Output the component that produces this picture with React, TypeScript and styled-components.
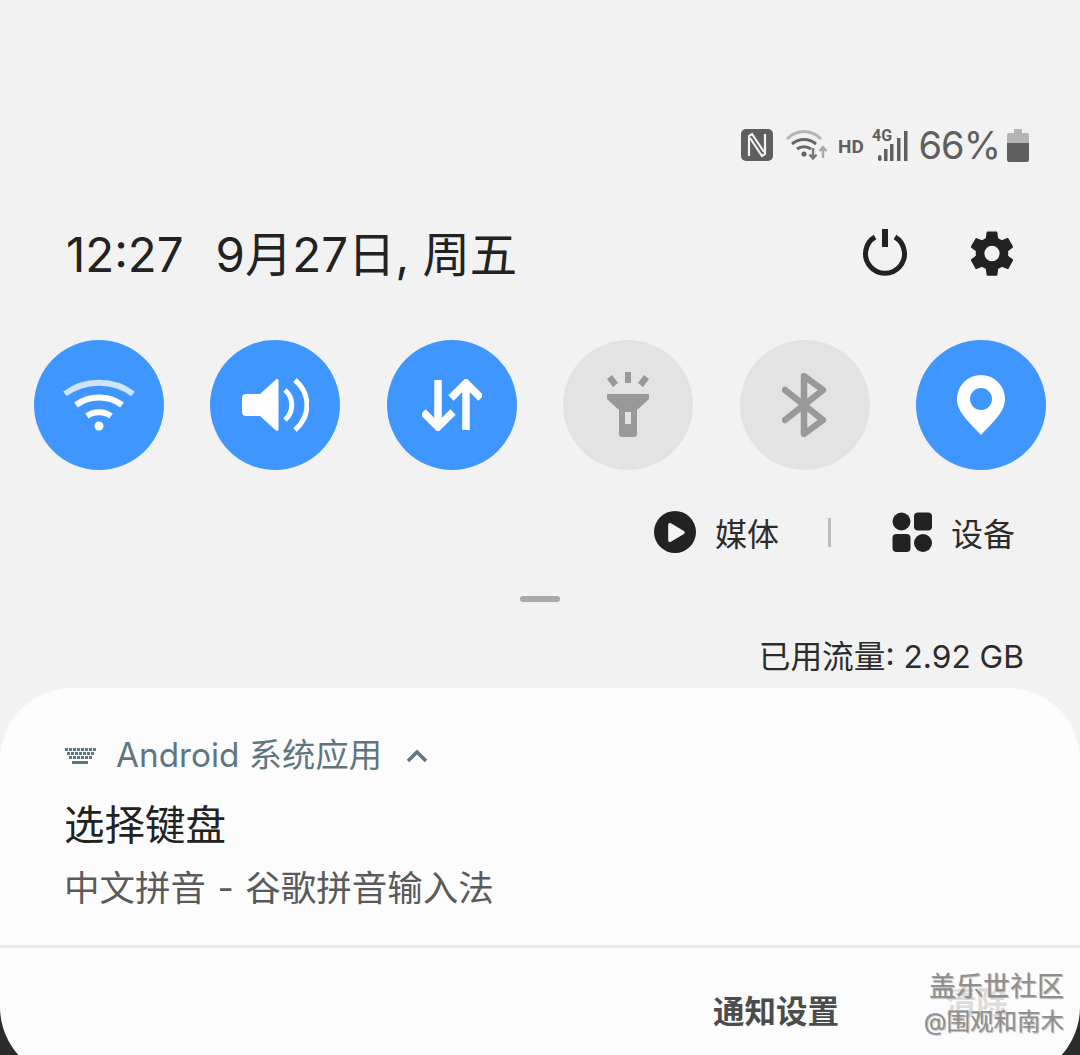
import React from "react";
import styled, { createGlobalStyle } from "styled-components";
import { FaPlay } from "react-icons/fa";

const font = `Inter, "Noto Sans CJK SC", sans-serif`;

const GlobalStyle = createGlobalStyle`
  html, body {
    margin: 0;
    padding: 0;
    background: #f2f2f2;
  }
  * {
    box-sizing: border-box;
  }
`;

const Screen = styled.div`
  width: 1080px;
  height: 1055px;
  background: #f2f2f2;
  font-family: ${font};
  overflow: hidden;
  display: flex;
  flex-direction: column;
  position: relative;

  & > * {
    flex: none;
  }
`;

const StatusBar = styled.div`
  height: 46px;
  margin-top: 122px;
  padding-right: 51px;
  display: flex;
  justify-content: flex-end;
  align-items: center;
  color: #5f5f5f;
`;

const StatusIcon = styled.svg<{ $gap?: number }>`
  display: block;
  margin-right: ${(p) => p.$gap ?? 0}px;
`;

const Battery = styled.span`
  font-size: 38px;
  line-height: 46px;
  letter-spacing: -1px;
  margin-right: 7px;
`;

const Header = styled.div`
  height: 80px;
  margin-top: 47px;
  padding: 0 62px 0 66px;
  display: flex;
  align-items: center;
  justify-content: space-between;
`;

const Clock = styled.div`
  font-size: 47.4px;
  color: #222;
  display: flex;
  align-items: baseline;
  gap: 32px;
  margin-bottom: 7px;
  white-space: nowrap;
`;

const HeaderActions = styled.div`
  display: flex;
  align-items: center;
  gap: 58px;
  margin-bottom: 4px;
`;

const Toggles = styled.div`
  margin-top: 45px;
  padding: 0 34px;
  display: flex;
  justify-content: space-between;
`;

const Toggle = styled.div<{ $on?: boolean }>`
  width: 130px;
  height: 130px;
  border-radius: 50%;
  background: ${(p) => (p.$on ? "#4096ff" : "#e3e3e3")};
  display: flex;
  align-items: center;
  justify-content: center;
`;

const MediaRow = styled.div`
  height: 50px;
  margin-top: 37px;
  padding-right: 65px;
  display: flex;
  justify-content: flex-end;
  align-items: center;
  font-size: 32px;
  color: #2b2b2b;
`;

const MediaItem = styled.div<{ $gap: number }>`
  display: flex;
  align-items: center;
  gap: ${(p) => p.$gap}px;
`;

const PlayBadge = styled.span`
  width: 42px;
  height: 42px;
  border-radius: 50%;
  background: #222;
  color: #f4f4f4;
  display: flex;
  align-items: center;
  justify-content: center;
  padding-left: 3px;
  font-size: 19px;
`;

const Separator = styled.div`
  width: 3px;
  height: 29px;
  margin: 0 61px 0 49px;
  background: #bdbdbd;
`;

const Handle = styled.div`
  align-self: center;
  width: 40px;
  height: 6px;
  margin-top: 39px;
  border-radius: 3px;
  background: #a9a9a9;
`;

const DataUsage = styled.div`
  margin-top: 33px;
  padding-right: 56px;
  text-align: right;
  font-size: 31.7px;
  line-height: 44px;
  color: #2b2b2b;
`;

// the page turns dark behind the card's lower corners
const CardBackdrop = styled.div`
  margin-top: 9px;
  position: relative;

  &::before {
    content: "";
    position: absolute;
    left: 0;
    right: 0;
    bottom: 0;
    height: 120px;
    background: #2b2b2b;
  }
`;

const Card = styled.div`
  position: relative;
  height: 391px;
  border-radius: 72px;
  background: #fcfcfc;
  display: flex;
  flex-direction: column;
`;

const CardBody = styled.div`
  height: 260px;
  flex: none;
  padding: 45px 64px 0;
  border-bottom: 3px solid #e8e8e8;
`;

const AppLine = styled.div`
  display: flex;
  align-items: center;
  height: 46px;
  font-size: 33.3px;
  color: #5f7680;
`;

const AppName = styled.span`
  margin: 0 0 8px 20px;
  white-space: nowrap;
`;

const Title = styled.div`
  margin-top: 18px;
  font-size: 40.5px;
  line-height: 58px;
  color: #222;
`;

const Subtitle = styled.div`
  margin-top: 9px;
  font-size: 35.5px;
  line-height: 50px;
  word-spacing: 1.5px;
  color: #5a5a5a;
  white-space: nowrap;
`;

const Actions = styled.div`
  flex: none;
  height: 130px;
  padding: 42px 0 0 713px;
  display: flex;
  gap: 106px;
  font-size: 31.5px;
  font-weight: 700;
  line-height: 44px;
  color: #4c4c4c;
  white-space: nowrap;
`;

const ClearAction = styled.span`
  margin-top: -9px;
  color: #dcdcdc;
`;

const Watermark = styled.div`
  position: absolute;
  right: 16px;
  top: 973px;
  text-align: right;
  color: #8f8f8f;
  line-height: 1;
  white-space: nowrap;
  text-shadow: 1px 1px 1px rgba(90, 90, 90, 0.45);
`;

const WatermarkTitle = styled.div`
  font-size: 27px;
`;

const WatermarkUser = styled.div`
  margin-top: 10px;
  font-size: 23.5px;
`;

const ChevronMark = styled.svg`
  margin-left: 24px;
`;

function NfcIcon() {
  return (
    <StatusIcon width="34" height="34" viewBox="0 0 34 34" $gap={12}>
      <rect x="1" y="1" width="32" height="32" rx="5" fill="#5f5f5f" />
      <path d="M9 28V8l3-2 12 18" fill="none" stroke="#f2f2f2" strokeWidth="2.200" />
      <path d="M25 6v20l-3 2L10 10" fill="none" stroke="#f2f2f2" strokeWidth="2.200" />
    </StatusIcon>
  );
}

function WifiStatusIcon() {
  return (
    <StatusIcon width="42" height="34" viewBox="0 0 42 34" $gap={10}>
      <path d="M1 11c10-10 24-10 34 0" fill="none" stroke="#b5b5b5" strokeWidth="3" />
      <path d="M6 16c7-6 17-6 24 0" fill="none" stroke="#666" strokeWidth="3" />
      <path d="M11 21c4-3 10-3 14 0" fill="none" stroke="#666" strokeWidth="3" />
      <circle cx="18" cy="26" r="2.600" fill="#666" />
      <path d="M27 20v10M23.500 26.500l3.500 4 3.500-4" fill="none" stroke="#777" strokeWidth="2.400" />
      <path d="M37 30V19M33.500 23l3.500-4 3.500 4" fill="none" stroke="#aaa" strokeWidth="2.400" />
    </StatusIcon>
  );
}

function NetworkIcon() {
  return (
    <StatusIcon width="70" height="36" viewBox="0 0 70 36" $gap={11}>
      <text x="0" y="26" fontFamily="Roboto, sans-serif" fontSize="19" fontWeight="700" fill="#5f5f5f">HD</text>
      <text x="34" y="14" fontFamily="Roboto, sans-serif" fontSize="16" fontWeight="700" fill="#5f5f5f">4G</text>
      <g fill="#5f5f5f">
        <rect x="40" y="28" width="3.500" height="6" rx="1.700" />
        <rect x="46" y="22" width="3.500" height="12" />
        <rect x="52" y="17" width="3.500" height="17" />
        <rect x="59" y="11" width="3.500" height="23" />
        <rect x="66" y="4" width="3.500" height="30" />
      </g>
    </StatusIcon>
  );
}

function BatteryIcon() {
  return (
    <StatusIcon width="22" height="34" viewBox="0 0 22 34">
      <path d="M7 1h8v4h5a2 2 0 0 1 2 2v8H0V7a2 2 0 0 1 2-2h5z" fill="#b4b4b4" />
      <path d="M0 15h22v17a2 2 0 0 1-2 2H2a2 2 0 0 1-2-2z" fill="#5f5f5f" />
    </StatusIcon>
  );
}

function PowerIcon() {
  return (
    <svg width="46" height="48" viewBox="0 0 46 48" fill="none" stroke="#222" strokeWidth="5">
      <path d="M13 8a19.500 19.500 0 1 0 20 0" />
      <path d="M23 0v18" strokeWidth="6" />
    </svg>
  );
}

function GearIcon() {
  return (
    <svg width="52" height="53" viewBox="0 0 24 24" fill="#222" preserveAspectRatio="none">
      <path fillRule="evenodd" d="M19.400 13c.04-.33.1-.66.1-1s-.06-.67-.1-1l2.100-1.650c.2-.15.24-.42.12-.64l-2-3.460c-.12-.22-.38-.3-.6-.22l-2.500 1c-.52-.4-1.080-.73-1.700-.98l-.37-2.650A.5.5 0 0 0 14 2h-4a.5.5 0 0 0-.5.42l-.37 2.650c-.62.25-1.180.58-1.700.98l-2.500-1c-.22-.08-.48 0-.6.22l-2 3.460c-.12.22-.08.49.12.64L4.560 11c-.04.33-.06.66-.06 1s.02.67.06 1l-2.110 1.650c-.2.15-.24.42-.12.64l2 3.460c.12.22.38.3.6.22l2.500-1c.52.4 1.080.73 1.700.98l.37 2.650c.04.24.25.42.5.42h4c.25 0 .46-.18.5-.42l.37-2.650c.62-.25 1.180-.58 1.700-.98l2.500 1c.22.08.48 0 .6-.22l2-3.460c.12-.22.08-.49-.12-.64zM12 15.500a3.500 3.500 0 1 1 0-7 3.500 3.500 0 0 1 0 7z" />
    </svg>
  );
}

function WifiIcon() {
  return (
    <svg width="72" height="58" viewBox="0 0 72 58" fill="none" strokeWidth="6">
      <path d="M2 18c19-15 49-15 68 0" stroke="#cfe3fc" />
      <path d="M13 29c13-10 33-10 46 0" stroke="#fff" />
      <path d="M24 40c7-5 17-5 24 0" stroke="#fff" />
      <circle cx="36" cy="50" r="4.500" fill="#fff" />
    </svg>
  );
}

function VolumeIcon() {
  return (
    <svg width="68" height="54" viewBox="0 0 68 54" fill="#fff">
      <path d="M5 16h14L35 1.500c1-.9 2.500-.3 2.500 1.200v48.600c0 1.500-1.500 2.100-2.500 1.200L19 38H5a4 4 0 0 1-4-4V20a4 4 0 0 1 4-4z" />
      <path d="M44 12c9 8 9 22 0 30" fill="none" stroke="#fff" strokeWidth="5" />
      <path d="M54 2c16 14 16 36 0 50" fill="none" stroke="#fff" strokeWidth="5" />
    </svg>
  );
}

function TransferIcon() {
  return (
    <svg width="60" height="52" viewBox="0 0 60 52" fill="none" stroke="#fff" strokeWidth="7.500">
      <path d="M16 1v46" />
      <path d="M1 33l15 15 15-15" />
      <path d="M44 51V5" />
      <path d="M29 19L44 4l15 15" />
    </svg>
  );
}

function TorchIcon() {
  return (
    <svg width="48" height="66" viewBox="0 0 48 66">
      <g fill="#999">
        <rect x="21" y="0" width="6" height="11" />
        <path d="M3 7l5-4 6 8-5 4zM45 7l-5-4-6 8 5 4z" />
        <path fillRule="evenodd" d="M3 22h42v5L33 38v24a3 3 0 0 1-3 3H18a3 3 0 0 1-3-3V38L3 27zM21 40v12h6V40z" />
      </g>
    </svg>
  );
}

function BluetoothIcon() {
  return (
    <svg width="46" height="64" viewBox="0 0 46 64" fill="none" stroke="#999" strokeWidth="6.500" strokeLinejoin="round" strokeLinecap="round">
      <path d="M3 17l38 30L22 61V3l19 14L3 47" />
    </svg>
  );
}

function PinIcon() {
  return (
    <svg width="48" height="60" viewBox="0 0 48 60">
      <path fillRule="evenodd" fill="#fff" d="M24 60C12 47 0 37 0 24a24 24 0 0 1 48 0c0 13-12 23-24 36zM24 35a11 11 0 1 0 0-22 11 11 0 0 0 0 22z" />
    </svg>
  );
}

function DevicesIcon() {
  return (
    <svg width="40" height="40" viewBox="0 0 40 40" fill="#222">
      <circle cx="9.500" cy="9.500" r="9" />
      <rect x="22" y="0.500" width="18" height="18" rx="4" />
      <rect x="0.500" y="22" width="18" height="18" rx="4" />
      <circle cx="31" cy="31" r="9" />
    </svg>
  );
}

function KeyboardIcon() {
  return (
    <svg width="32" height="18" viewBox="0 0 32 18" fill="#5f7680">
      {[1, 5, 9].map((y, row) => (
        <g key={y}>
          {Array.from({ length: 8 - row }).map((_, i) => (
            <rect key={i} x={1 + row * 2 + i * 4} y={y} width="3" height="3" />
          ))}
        </g>
      ))}
      <rect x="8" y="14" width="16" height="3" />
    </svg>
  );
}

function ChevronIcon() {
  return (
    <ChevronMark width="22" height="14" viewBox="0 0 22 14" fill="none" stroke="#5f7680" strokeWidth="3.500">
      <path d="M2 12l9-9 9 9" />
    </ChevronMark>
  );
}

export default function App() {
  return (
    <Screen>
      <GlobalStyle />
      <StatusBar>
        <NfcIcon />
        <WifiStatusIcon />
        <NetworkIcon />
        <Battery>66%</Battery>
        <BatteryIcon />
      </StatusBar>

      <Header>
        <Clock>
          <span>12:27</span>
          <span>9月27日, 周五</span>
        </Clock>
        <HeaderActions>
          <PowerIcon />
          <GearIcon />
        </HeaderActions>
      </Header>

      <Toggles>
        <Toggle $on><WifiIcon /></Toggle>
        <Toggle $on><VolumeIcon /></Toggle>
        <Toggle $on><TransferIcon /></Toggle>
        <Toggle><TorchIcon /></Toggle>
        <Toggle><BluetoothIcon /></Toggle>
        <Toggle $on><PinIcon /></Toggle>
      </Toggles>

      <MediaRow>
        <MediaItem $gap={19}>
          <PlayBadge><FaPlay /></PlayBadge>
          媒体
        </MediaItem>
        <Separator />
        <MediaItem $gap={19}>
          <DevicesIcon />
          设备
        </MediaItem>
      </MediaRow>

      <Handle />
      <DataUsage>已用流量: 2.92 GB</DataUsage>

      <CardBackdrop>
        <Card>
          <CardBody>
            <AppLine>
              <KeyboardIcon />
              <AppName>Android 系统应用</AppName>
              <ChevronIcon />
            </AppLine>
            <Title>选择键盘</Title>
            <Subtitle>中文拼音 - 谷歌拼音输入法</Subtitle>
          </CardBody>
          <Actions>
            <span>通知设置</span>
            <ClearAction>清除</ClearAction>
          </Actions>
        </Card>
      </CardBackdrop>

      <Watermark>
        <WatermarkTitle>盖乐世社区</WatermarkTitle>
        <WatermarkUser>@围观和南木</WatermarkUser>
      </Watermark>
    </Screen>
  );
}
